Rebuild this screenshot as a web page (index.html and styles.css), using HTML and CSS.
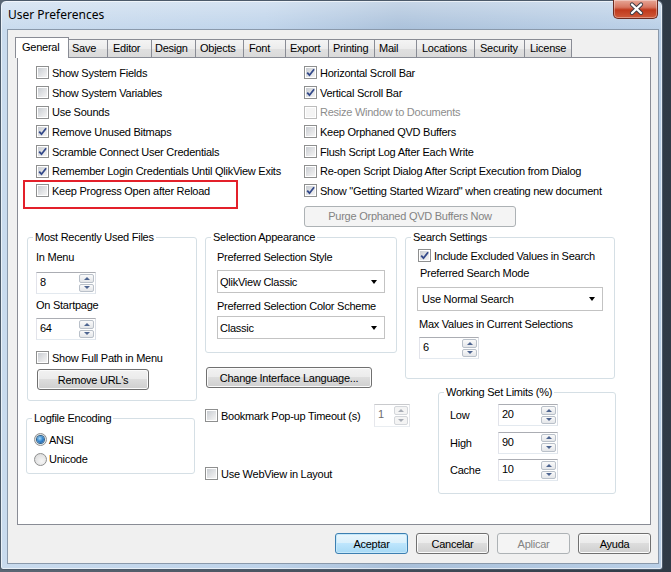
FILE: index.html
```html
<!DOCTYPE html>
<html lang="en">
<head>
<meta charset="UTF-8">
<title>User Preferences</title>
<link rel="stylesheet" href="styles.css">
</head>
<body>
<div class="window">
  <div class="titlebar">
    <span class="title">User Preferences</span>
    <span class="close">
      <svg width="45" height="18" viewBox="0 0 45 18">
        <path d="M18 4.5l9 8.5M27 4.5l-9 8.5" stroke="#3a3a44" stroke-width="4.2" stroke-linecap="round"/>
        <path d="M18 4.5l9 8.5M27 4.5l-9 8.5" stroke="#fff" stroke-width="2.4" stroke-linecap="round"/>
      </svg>
    </span>
  </div>

  <div class="client">
    <div class="tabs">
      <div class="tab active">General</div>
      <div class="tab">Save</div>
      <div class="tab">Editor</div>
      <div class="tab">Design</div>
      <div class="tab">Objects</div>
      <div class="tab">Font</div>
      <div class="tab">Export</div>
      <div class="tab">Printing</div>
      <div class="tab">Mail</div>
      <div class="tab">Locations</div>
      <div class="tab">Security</div>
      <div class="tab">License</div>
    </div>

    <div class="panel">
      <div class="top">
        <div class="checklist">
          <label class="row"><span class="cb"></span>Show System Fields</label>
          <label class="row"><span class="cb"></span>Show System Variables</label>
          <label class="row"><span class="cb"></span>Use Sounds</label>
          <label class="row"><span class="cb on"><svg viewBox="0 0 13 13"><path d="M3.2 6.6l2.3 2.6 4.6-6"/></svg></span>Remove Unused Bitmaps</label>
          <label class="row"><span class="cb on"><svg viewBox="0 0 13 13"><path d="M3.2 6.6l2.3 2.6 4.6-6"/></svg></span>Scramble Connect User Credentials</label>
          <label class="row"><span class="cb on"><svg viewBox="0 0 13 13"><path d="M3.2 6.6l2.3 2.6 4.6-6"/></svg></span>Remember Login Credentials Until QlikView Exits</label>
          <label class="row marked"><span class="cb"></span>Keep Progress Open after Reload</label>
        </div>
        <div class="checklist">
          <label class="row"><span class="cb on"><svg viewBox="0 0 13 13"><path d="M3.2 6.6l2.3 2.6 4.6-6"/></svg></span>Horizontal Scroll Bar</label>
          <label class="row"><span class="cb on"><svg viewBox="0 0 13 13"><path d="M3.2 6.6l2.3 2.6 4.6-6"/></svg></span>Vertical Scroll Bar</label>
          <label class="row disabled"><span class="cb"></span>Resize Window to Documents</label>
          <label class="row"><span class="cb"></span>Keep Orphaned QVD Buffers</label>
          <label class="row"><span class="cb"></span>Flush Script Log After Each Write</label>
          <label class="row"><span class="cb"></span>Re-open Script Dialog After Script Execution from Dialog</label>
          <label class="row"><span class="cb on"><svg viewBox="0 0 13 13"><path d="M3.2 6.6l2.3 2.6 4.6-6"/></svg></span>Show "Getting Started Wizard" when creating new document</label>
          <button class="btn purge" disabled>Purge Orphaned QVD Buffers Now</button>
        </div>
      </div>

      <div class="middle">
        <div class="col">
          <fieldset class="group mru">
            <legend>Most Recently Used Files</legend>
            <div class="inner">
              <div class="lbl l-menu">In Menu</div>
              <div class="spin s-menu"><span class="val">8</span><span class="arrows"><i class="up"></i><i class="dn"></i></span></div>
              <div class="lbl l-start">On Startpage</div>
              <div class="spin s-start"><span class="val">64</span><span class="arrows"><i class="up"></i><i class="dn"></i></span></div>
              <label class="row r-path"><span class="cb"></span>Show Full Path in Menu</label>
              <button class="btn urls">Remove URL's</button>
            </div>
          </fieldset>
          <fieldset class="group logfile">
            <legend>Logfile Encoding</legend>
            <div class="inner">
              <label class="row r-ansi"><span class="radio on"></span>ANSI</label>
              <label class="row"><span class="radio"></span>Unicode</label>
            </div>
          </fieldset>
        </div>

        <div class="col">
          <fieldset class="group selection">
            <legend>Selection Appearance</legend>
            <div class="inner">
              <div class="lbl l-style">Preferred Selection Style</div>
              <div class="select s-style"><span>QlikView Classic</span><i class="caret"></i></div>
              <div class="lbl l-scheme">Preferred Selection Color Scheme</div>
              <div class="select s-scheme"><span>Classic</span><i class="caret"></i></div>
            </div>
          </fieldset>
          <button class="btn lang">Change Interface Language...</button>
          <div class="bookmark">
            <label class="row bm-label"><span class="cb"></span>Bookmark Pop-up Timeout (s)</label>
            <div class="spin small off"><span class="val">1</span><span class="arrows"><i class="up"></i><i class="dn"></i></span></div>
          </div>
          <label class="row webview"><span class="cb"></span>Use WebView in Layout</label>
        </div>

        <div class="col">
          <fieldset class="group search">
            <legend>Search Settings</legend>
            <div class="inner">
              <label class="row r-incl"><span class="cb on"><svg viewBox="0 0 13 13"><path d="M3.2 6.6l2.3 2.6 4.6-6"/></svg></span>Include Excluded Values in Search</label>
              <div class="lbl l-mode">Preferred Search Mode</div>
              <div class="select s-mode"><span>Use Normal Search</span><i class="caret"></i></div>
              <div class="lbl l-max">Max Values in Current Selections</div>
              <div class="spin s-max"><span class="val">6</span><span class="arrows"><i class="up"></i><i class="dn"></i></span></div>
            </div>
          </fieldset>
          <fieldset class="group working">
            <legend>Working Set Limits (%)</legend>
            <div class="inner">
              <div class="ws-row"><span class="ws-lbl">Low</span><div class="spin"><span class="val">20</span><span class="arrows"><i class="up"></i><i class="dn"></i></span></div></div>
              <div class="ws-row"><span class="ws-lbl">High</span><div class="spin"><span class="val">90</span><span class="arrows"><i class="up"></i><i class="dn"></i></span></div></div>
              <div class="ws-row"><span class="ws-lbl">Cache</span><div class="spin"><span class="val">10</span><span class="arrows"><i class="up"></i><i class="dn"></i></span></div></div>
            </div>
          </fieldset>
        </div>
      </div>
    </div>

    <div class="buttons">
      <button class="btn default">Aceptar</button>
      <button class="btn">Cancelar</button>
      <button class="btn" disabled>Aplicar</button>
      <button class="btn">Ayuda</button>
    </div>
  </div>
</div>
</body>
</html>
```

FILE: styles.css
```css
* {
  box-sizing: border-box;
}

body {
  margin: 0;
  width: 671px;
  height: 572px;
  overflow: hidden;
  background: linear-gradient(90deg, #5b6774, #2f3a46);
  font-family: "Liberation Sans", Arial, sans-serif;
  font-size: 11px;
  letter-spacing: -0.25px;
  color: #000;
}

/* window frame */
.window {
  width: 663px;
  height: 570px;
  border: 1px solid #4c5a6a;
  border-radius: 6px 6px 3px 3px;
  background:
    linear-gradient(180deg, rgba(255,255,255,0.35), rgba(255,255,255,0) 30px),
    linear-gradient(90deg, #c9dbee 0, #bed3ea 40%, #a9c0da 60%, #b9cfe7 100%);
  box-shadow: inset 0 0 0 1px rgba(255,255,255,0.6);
  display: flex;
  flex-direction: column;
}

.titlebar {
  height: 28px;
  display: flex;
  align-items: flex-start;
  justify-content: space-between;
}

.title {
  font-family: "Noto Sans", "Open Sans", sans-serif;
  font-size: 12px;
  letter-spacing: 0;
  margin: 6px 0 0 7px;
  line-height: 16px;
}

.close {
  width: 45px;
  height: 19px;
  margin: -1px 4px 0 0;
  border: 1px solid #6b2a20;
  border-top: none;
  border-radius: 0 0 5px 5px;
  background: linear-gradient(180deg, #e7a797 0, #d77660 40%, #c0391c 55%, #cf5a3a 100%);
  box-shadow: inset 0 0 0 1px rgba(255,255,255,0.35);
}

.close svg {
  display: block;
}

.client {
  flex: 1;
  margin: 0 3px 5px 6px;
  border: 1px solid #8a99ab;
  background: #f0f0f0;
  display: flex;
  flex-direction: column;
}

/* tabs */
.tabs {
  display: flex;
  padding: 7px 0 0 7px;
  height: 27px;
}

.tab {
  height: 18px;
  margin-top: 2px;
  margin-left: -1px;
  padding-left: 4px;
  line-height: 16px;
  border: 1px solid #898c95;
  border-bottom: none;
  background: linear-gradient(180deg, #f4f4f4 0, #ececec 50%, #e0e0e0 51%, #dadada 100%);
}

.tab.active {
  height: 21px;
  margin: 0 -1px 0 0;
  padding-left: 6px;
  line-height: 19px;
  background: #fff;
  position: relative;
  z-index: 2;
  width: 54px;
}

.tab:nth-child(2) { width: 41px; }
.tab:nth-child(3) { width: 45px; padding-left: 5px; }
.tab:nth-child(4) { width: 45px; padding-left: 3px; }
.tab:nth-child(5) { width: 49px; }
.tab:nth-child(6) { width: 43px; padding-left: 5px; }
.tab:nth-child(7) { width: 44px; }
.tab:nth-child(8) { width: 47px; }
.tab:nth-child(9) { width: 43px; }
.tab:nth-child(10) { width: 59px; padding-left: 5px; }
.tab:nth-child(11) { width: 51px; padding-left: 5px; }
.tab:nth-child(12) { width: 48px; padding-left: 5px; }

.panel {
  height: 468px;
  margin: 0 7px 0 9px;
  border: 1px solid #898c95;
  background: #fff;
}

/* checkbox lists */
.top {
  display: flex;
  padding: 5px 0 0 18px;
  height: 173px;
}

.checklist {
  display: flex;
  flex-direction: column;
  width: 268px;
}

.row {
  display: flex;
  align-items: center;
  height: 19.7px;
  white-space: nowrap;
  position: relative;
}

.row.disabled {
  color: #8d8d8d;
}

.row.marked::after {
  content: "";
  position: absolute;
  left: -13px;
  top: -1px;
  width: 211px;
  height: 25px;
  border: 2px solid #e3202a;
}

.cb {
  width: 13px;
  height: 13px;
  margin-right: 3px;
  flex: none;
  border: 1px solid #8e8f8f;
  background: #fff;
  padding: 1px;
  display: flex;
}

.cb::before {
  content: "";
  flex: 1;
  background: linear-gradient(135deg, #c9cdd2 0, #e4e5e7 60%, #f4f4f4 100%);
}

.cb svg {
  position: absolute;
  width: 13px;
  height: 13px;
  margin: -2px 0 0 -2px;
}

.cb svg path {
  fill: none;
  stroke: #33498a;
  stroke-width: 1.8;
}

.row.disabled .cb {
  border-color: #bcbcbc;
}

.row.disabled .cb::before {
  background: #f4f4f4;
}

.radio {
  width: 13px;
  height: 13px;
  margin-right: 3px;
  border: 1px solid #8e8f8f;
  border-radius: 50%;
  background: radial-gradient(circle at 60% 65%, #f6f6f6 0, #dcdcdc 80%);
  display: flex;
  align-items: center;
  justify-content: center;
}

.radio.on::before {
  content: "";
  width: 7px;
  height: 7px;
  border-radius: 50%;
  background: radial-gradient(circle at 40% 35%, #a6d9f7 0, #3a8bd2 45%, #1b4f94 100%);
  box-shadow: 0 0 0 1px #2c628b;
}

/* buttons */
.btn {
  font-family: inherit;
  font-size: 11px;
  letter-spacing: -0.25px;
  color: #000;
  height: 21px;
  padding: 0;
  border: 1px solid #707070;
  border-radius: 3px;
  background: linear-gradient(180deg, #f2f2f2 0, #ebebeb 48%, #dddddd 50%, #cfcfcf 100%);
  box-shadow: inset 0 0 0 1px #fbfbfb;
}

.btn.default {
  border-color: #3c7fb1;
  background: linear-gradient(180deg, #eaf6fd 0, #d9f0fc 48%, #bee6fd 50%, #a7d9f5 100%);
  box-shadow: inset 0 0 0 1px #c5e8fa;
}

.btn:disabled {
  color: #838383;
  border-color: #adb2b5;
  background: #f4f4f4;
  box-shadow: none;
}

.purge {
  width: 212px;
  margin-top: 5px;
}

/* group boxes */
.middle {
  display: grid;
  grid-template-columns: 170px 192px 211px;
  column-gap: 8px;
  padding-left: 9px;
}

.col {
  display: flex;
  flex-direction: column;
  align-items: flex-start;
}

.group {
  margin: 0;
  padding: 0;
  min-width: 0;
  border: 1px solid #d5dfe5;
  border-radius: 3px;
}

.group legend {
  padding: 0 2px;
  margin-left: 5px;
  line-height: 13px;
}

.inner {
  display: flex;
  flex-direction: column;
  align-items: flex-start;
}

.lbl {
  line-height: 13px;
}

.spin {
  display: flex;
  width: 60px;
  height: 22px;
  border: 1px solid;
  border-color: #abadb3 #dbdfe6 #e3e9ef #e2e3ea;
  background: #fff;
  padding: 1px 1px 1px 0;
}

.spin .val {
  flex: 1;
  padding-left: 3px;
  line-height: 17px;
}

.spin .arrows {
  width: 15px;
  display: flex;
  flex-direction: column;
  gap: 1px;
}

.spin .arrows i {
  flex: 1;
  border: 1px solid #b9c0c9;
  border-radius: 2px;
  background: linear-gradient(180deg, #fafafa, #e4e6e9);
  display: flex;
  align-items: center;
  justify-content: center;
}

.spin .arrows i::before {
  content: "";
  border-left: 3px solid transparent;
  border-right: 3px solid transparent;
}

.spin .arrows .up::before {
  border-bottom: 3px solid #4e6590;
}

.spin .arrows .dn::before {
  border-top: 3px solid #4e6590;
}

.spin.off {
  color: #6d6d6d;
  border-color: #c9cacd #e4e6ea #e9edf1 #e6e7ec;
}

.spin.off .arrows i {
  border-color: #d3d6da;
  background: #f4f4f4;
}

.spin.off .arrows i::before {
  border-bottom-color: #a8adb6;
  border-top-color: #a8adb6;
}

.select {
  display: flex;
  align-items: center;
  justify-content: space-between;
  height: 23px;
  padding: 0 7px 0 2px;
  border: 1px solid #c3c3c3;
  background: #fff;
}

.caret {
  border-left: 3.5px solid transparent;
  border-right: 3.5px solid transparent;
  border-top: 4px solid #000;
}

/* most recently used */
.mru {
  width: 170px;
  height: 170px;
}

.mru .inner {
  padding-left: 8px;
}

.l-menu { margin-top: 7px; }
.s-menu { margin-top: 8px; }
.l-start { margin-top: 5px; }
.s-start { margin-top: 6px; }
.r-path { margin-top: 8px; height: 19px; }

.urls {
  width: 112px;
  margin: 2px 0 0 1px;
}

.logfile {
  width: 169px;
  height: 62px;
  margin: 11px 0 0 -1px;
}

.logfile .inner {
  padding-left: 7px;
}

.logfile .row {
  height: 19.5px;
}

.logfile .radio {
  margin-right: 2px;
}

.r-ansi { margin-top: 5px; }

/* selection appearance */
.selection {
  width: 192px;
  height: 122px;
}

.selection .inner {
  padding-left: 11px;
}

.l-style { margin-top: 7px; }
.s-style { margin-top: 6px; width: 168px; }
.l-scheme { margin-top: 7px; }
.s-scheme { margin-top: 3px; width: 168px; }

.lang {
  width: 166px;
  margin: 14px 0 0 1px;
}

.bookmark {
  display: flex;
  align-items: center;
  margin-top: 16px;
}

.bm-label {
  width: 169px;
}

.spin.small {
  width: 36px;
  height: 23px;
}

.spin.small .arrows {
  width: 14px;
}

.webview {
  margin-top: 37px;
  height: 19px;
}

/* search settings */
.search {
  width: 210px;
  height: 148px;
}

.search .inner {
  padding-left: 11px;
}

.r-incl { margin: 2px 0 0 1px; height: 19px; }
.l-mode { margin: 2px 0 0 3px; }
.s-mode { margin-top: 7px; width: 186px; height: 24px; padding-left: 4px; }
.l-max { margin: 7px 0 0 2px; }
.s-max { margin: 6px 0 0 2px; }

/* working set */
.working {
  width: 178px;
  height: 108px;
  margin: 7px 0 0 33px;
}

.working legend {
  margin-left: 5px;
}

.working .inner {
  padding: 5px 0 0 11px;
  gap: 5.5px;
}

.ws-row {
  display: flex;
  align-items: center;
}

.ws-lbl {
  width: 48px;
}

/* dialog buttons */
.buttons {
  display: flex;
  justify-content: flex-end;
  gap: 8px;
  padding-right: 7px;
  margin-top: 8px;
}

.buttons .btn {
  width: 73px;
}
```
